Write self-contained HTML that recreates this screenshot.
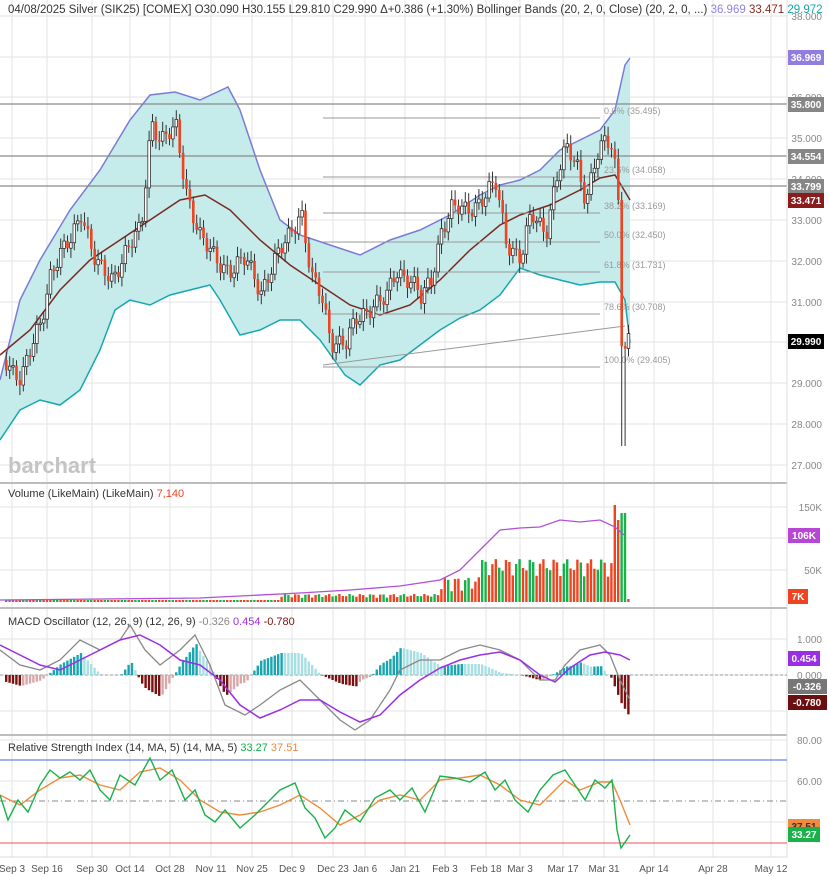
<!DOCTYPE html>
<html><head><meta charset="utf-8"><style>
html,body{margin:0;padding:0;background:#fff;}
svg{display:block;font-family:"Liberation Sans",sans-serif;}
</style></head><body>
<svg id="s" width="829" height="876" viewBox="0 0 829 876" xmlns="http://www.w3.org/2000/svg">
<rect width="829" height="876" fill="#fff"/>
<g id="grid" stroke="#e3e3e3" stroke-width="1"></g>
<polygon fill="#c6ebeb" points="0,380 20,300 40,260 70,210 100,170 130,120 150,95 175,92 200,100 228,87 240,110 260,170 280,220 300,235 330,245 360,255 390,240 420,230 450,215 480,195 500,185 520,180 540,170 560,150 580,140 600,130 615,110 625,65 630,58 630,343 625,300 615,282 600,282 580,285 560,280 540,275 520,268 500,295 480,310 460,318 440,330 420,345 400,360 380,365 360,385 345,375 320,340 300,320 280,320 260,330 240,335 220,300 210,285 190,290 170,295 150,305 130,300 115,310 100,350 80,390 60,405 40,400 20,410 0,440"/>
<polyline fill="none" stroke="#7b7bd6" stroke-width="1.5" points="0,380 20,300 40,260 70,210 100,170 130,120 150,95 175,92 200,100 228,87 240,110 260,170 280,220 300,235 330,245 360,255 390,240 420,230 450,215 480,195 500,185 520,180 540,170 560,150 580,140 600,130 615,110 625,65 630,58"/>
<polyline fill="none" stroke="#17a7b0" stroke-width="1.5" points="0,440 20,410 40,400 60,405 80,390 100,350 115,310 130,300 150,305 170,295 190,290 210,285 220,300 240,335 260,330 280,320 300,320 320,340 345,375 360,385 380,365 400,360 420,345 440,330 460,318 480,310 500,295 520,268 540,275 560,280 580,285 600,282 615,282 625,300 630,343"/>
<polyline fill="none" stroke="#7a2a22" stroke-width="1.5" points="0,355 30,330 60,290 90,260 120,240 150,220 180,200 205,195 230,210 260,240 290,265 320,285 350,305 380,315 410,305 440,280 470,250 500,225 520,215 550,205 580,190 600,178 615,175 630,200"/>
<g stroke="#8a8a8a" stroke-width="1.2">
<line x1="0" y1="104" x2="787" y2="104"/><line x1="0" y1="156" x2="787" y2="156"/><line x1="0" y1="186" x2="787" y2="186"/>
</g>
<g stroke="#999" stroke-width="1">
<line x1="323" y1="118" x2="600" y2="118"/><line x1="323" y1="177" x2="600" y2="177"/><line x1="323" y1="213" x2="600" y2="213"/><line x1="323" y1="242" x2="600" y2="242"/><line x1="323" y1="272" x2="600" y2="272"/><line x1="323" y1="314" x2="600" y2="314"/><line x1="323" y1="367" x2="600" y2="367"/>
<line x1="323" y1="365" x2="625" y2="326"/>
</g>
<g fill="#999" font-size="9">
<text x="604" y="114">0.0% (35.495)</text><text x="604" y="173">23.6% (34.058)</text><text x="604" y="209">38.2% (33.169)</text><text x="604" y="238">50.0% (32.450)</text><text x="604" y="268">61.8% (31.731)</text><text x="604" y="310">78.6% (30.708)</text><text x="604" y="363">100.0% (29.405)</text>
</g>
<g id="candles"></g>
<text x="8" y="473" font-size="22" font-weight="bold" fill="#c4c4c4">barchart</text>
<g stroke="#bdbdbd" stroke-width="2"><line x1="0" y1="483" x2="787" y2="483"/><line x1="0" y1="608" x2="787" y2="608"/><line x1="0" y1="735" x2="787" y2="735"/></g>
<line x1="787" y1="0" x2="787" y2="857" stroke="#ddd"/>
<line x1="0" y1="857" x2="787" y2="857" stroke="#ddd"/>
<g id="vol"></g>
<polyline fill="none" stroke="#b34fd8" stroke-width="1.3" points="0,600 200,598 300,593 350,590 400,586 440,580 460,570 480,550 500,530 520,528 540,527 560,520 580,522 600,520 615,527 624,535"/>
<line x1="0" y1="675" x2="787" y2="675" stroke="#999" stroke-dasharray="3,2"/>
<g id="hist"></g>
<polyline id="mg" fill="none" stroke="#888" stroke-width="1.3" points="0,650 20,665 40,670 60,660 80,640 100,650 120,640 130,625 145,650 160,665 180,650 195,635 210,665 225,705 245,715 260,705 280,690 300,680 320,700 340,720 355,730 370,720 390,690 400,670 420,660 440,660 460,650 480,645 500,650 520,660 540,680 555,680 565,665 580,650 600,645 610,655 620,680 630,700"/>
<polyline id="mp" fill="none" stroke="#9a2ee6" stroke-width="1.5" points="0,645 20,655 40,665 60,670 80,660 100,650 120,640 140,635 160,645 180,660 200,665 220,680 240,705 260,718 280,710 300,700 320,700 340,712 360,722 380,715 400,695 420,680 440,668 460,660 480,655 500,652 520,660 540,675 555,682 570,668 590,655 605,652 620,655 630,660"/>
<line x1="0" y1="760" x2="787" y2="760" stroke="#4466ee"/>
<line x1="0" y1="801" x2="787" y2="801" stroke="#888" stroke-dasharray="6,3,1,3"/>
<line x1="0" y1="843" x2="787" y2="843" stroke="#f05050"/>
<polyline fill="none" stroke="#f08a3c" stroke-width="1.4" points="0,795 20,805 40,790 60,778 80,775 100,785 120,790 140,772 160,768 180,780 200,800 220,812 240,815 260,812 280,805 300,795 320,808 340,825 360,815 380,800 400,795 420,800 440,780 460,778 480,775 500,785 520,800 540,805 555,790 565,780 580,790 600,782 612,782 620,800 630,825"/>
<polyline fill="none" stroke="#19b24a" stroke-width="1.4" points="0,795 8,820 18,800 28,812 40,785 50,770 60,778 70,772 80,780 90,770 100,790 110,800 120,775 135,785 150,758 160,780 172,770 185,800 195,790 205,815 215,822 225,810 240,828 255,815 270,800 280,790 295,783 305,808 315,818 325,838 335,828 345,810 360,822 375,798 390,790 400,800 412,788 425,812 440,776 455,778 470,782 485,772 495,790 505,780 515,800 528,812 540,790 553,775 565,770 575,785 585,800 595,780 605,788 612,780 617,830 621,848 630,835"/>
<text x="8" y="13" font-size="11.5" fill="#333">04/08/2025 Silver (SIK25) [COMEX] O30.090 H30.155 L29.810 C29.990 Δ+0.386 (+1.30%) Bollinger Bands (20, 2, 0, Close)  (20, 2, 0, ...) <tspan fill="#8f84e0">36.969</tspan> <tspan fill="#8b2a22">33.471</tspan> <tspan fill="#19a6a6">29.972</tspan></text>
<text x="8" y="497" font-size="11" fill="#333">Volume (LikeMain)  (LikeMain) <tspan fill="#ee4422">7,140</tspan></text>
<text x="8" y="625" font-size="11" fill="#333">MACD Oscillator (12, 26, 9)  (12, 26, 9) <tspan fill="#888">-0.326</tspan> <tspan fill="#9a2ee6">0.454</tspan> <tspan fill="#7a1010">-0.780</tspan></text>
<text x="8" y="751" font-size="11" fill="#333">Relative Strength Index (14, MA, 5)  (14, MA, 5) <tspan fill="#19b24a">33.27</tspan> <tspan fill="#f08a3c">37.51</tspan></text>
<g font-size="10" fill="#888" text-anchor="end">
<text x="822" y="20">38.000</text><text x="822" y="101">36.000</text><text x="822" y="142">35.000</text><text x="822" y="183">34.000</text><text x="822" y="224">33.000</text><text x="822" y="265">32.000</text><text x="822" y="306">31.000</text><text x="822" y="387">29.000</text><text x="822" y="428">28.000</text><text x="822" y="469">27.000</text>
<text x="822" y="511">150K</text><text x="822" y="574">50K</text>
<text x="822" y="643">1.000</text><text x="822" y="679">0.000</text>
<text x="822" y="744">80.00</text><text x="822" y="785">60.00</text>
</g>
<g font-size="10" font-weight="bold" fill="#fff" text-anchor="middle">
<rect x="788" y="50" width="36" height="15" fill="#8f7de0"/><text x="806" y="61">36.969</text>
<rect x="788" y="97" width="36" height="15" fill="#868686"/><text x="806" y="108">35.800</text>
<rect x="788" y="149" width="36" height="15" fill="#868686"/><text x="806" y="160">34.554</text>
<rect x="788" y="179" width="36" height="15" fill="#868686"/><text x="806" y="190">33.799</text>
<rect x="788" y="193" width="36" height="15" fill="#8b1c1c"/><text x="806" y="204">33.471</text>
<rect x="788" y="334" width="36" height="15" fill="#000"/><text x="806" y="345">29.990</text>
<rect x="788" y="528" width="32" height="15" fill="#b846d4"/><text x="804" y="539">106K</text>
<rect x="788" y="589" width="20" height="15" fill="#ee4422"/><text x="798" y="600">7K</text>
<rect x="788" y="651" width="32" height="15" fill="#9a2ee6"/><text x="804" y="662">0.454</text>
<rect x="788" y="679" width="39" height="15" fill="#777"/><text x="807" y="690">-0.326</text>
<rect x="788" y="695" width="39" height="15" fill="#6a1010"/><text x="807" y="706">-0.780</text>
<rect x="788" y="819" width="32" height="15" fill="#f08a3c"/><text x="804" y="830" fill="#333">37.51</text>
<rect x="788" y="827" width="32" height="15" fill="#19b24a"/><text x="804" y="838">33.27</text>
</g>
<g font-size="10" fill="#555" text-anchor="middle">
<text x="12" y="872">Sep 3</text><text x="47" y="872">Sep 16</text><text x="92" y="872">Sep 30</text><text x="130" y="872">Oct 14</text><text x="170" y="872">Oct 28</text><text x="211" y="872">Nov 11</text><text x="252" y="872">Nov 25</text><text x="292" y="872">Dec 9</text><text x="333" y="872">Dec 23</text><text x="365" y="872">Jan 6</text><text x="405" y="872">Jan 21</text><text x="445" y="872">Feb 3</text><text x="486" y="872">Feb 18</text><text x="520" y="872">Mar 3</text><text x="563" y="872">Mar 17</text><text x="604" y="872">Mar 31</text><text x="654" y="872">Apr 14</text><text x="713" y="872">Apr 28</text><text x="771" y="872">May 12</text>
</g>
</svg>
<script>
(function(){
var NS="http://www.w3.org/2000/svg";
function el(p,t,a){var e=document.createElementNS(NS,t);for(var k in a)e.setAttribute(k,a[k]);p.appendChild(e);return e;}
var g=document.getElementById("grid");
[12,47,92,130,170,211,252,292,333,365,405,445,486,520,563,604,654,713,771].forEach(function(x){el(g,"line",{x1:x,y1:0,x2:x,y2:857});});
[16,57,97,138,179,220,261,302,342,383,424,465,507,538,570,639,675,711,740,781,822].forEach(function(y){el(g,"line",{x1:0,y1:y,x2:787,y2:y});});
function interp(p,x){for(var i=0;i<p.length-1;i++){if(x<=p[i+1][0]){var t=(x-p[i][0])/(p[i+1][0]-p[i][0]);return p[i][1]+t*(p[i+1][1]-p[i][1]);}}return p[p.length-1][1];}
var P=[[5,360],[20,380],[40,320],[50,270],[70,240],[80,210],[95,265],[110,280],[125,250],[140,230],[150,120],[160,140],[175,130],[185,190],[200,240],[215,260],[230,270],[245,260],[260,290],[275,260],[290,230],[300,210],[310,280],[320,295],[330,340],[345,345],[355,320],[370,305],[385,300],[395,270],[410,280],[420,300],[430,280],[440,230],[450,210],[465,210],[480,200],[495,185],[505,240],[520,260],[530,215],[545,230],[555,180],[565,150],[575,160],[585,200],[595,160],[605,140],[612,145],[617,200],[621,372],[626,330],[630,342]];
var c=document.getElementById("candles"),prev=360,i=0;
for(var x=5;x<=630;x+=3.4){i++;var cl=interp(P,x)+Math.sin(i*1.7)*8+Math.sin(i*0.6)*4;if(x>615)cl=interp(P,x);
var op=prev,top=Math.min(op,cl),bot=Math.max(op,cl),h=Math.max(bot-top,1.5);
var hi=top-4-Math.abs(Math.sin(i*2.3))*6,lo=bot+4+Math.abs(Math.cos(i*1.9))*6;
if(x>620&&x<624)lo=446;
el(c,"line",{x1:x+1.3,y1:hi,x2:x+1.3,y2:lo,stroke:"#333","stroke-width":1});
if(cl>op)el(c,"rect",{x:x,y:top,width:2.6,height:h,fill:"#ee4422"});
else el(c,"rect",{x:x,y:top,width:2.6,height:h,fill:"#fff",stroke:"#333","stroke-width":0.8});
prev=cl;}
var v=document.getElementById("vol");i=0;
for(var x=5;x<=628;x+=3.4){i++;var base=x<280?2:x<440?4+Math.abs(Math.sin(i))*4:x<480?10+Math.abs(Math.sin(i))*15:25+Math.abs(Math.sin(i*0.9))*18;
var col=(Math.sin(i*1.3)>0.3?"#19b24a":"#ee4422");
if(x>612&&x<616){base=97;col="#ee4422";}else if(x>616&&x<620){base=82;col="#ee4422";}else if(x>620&&x<625){base=89;col="#19b24a";}else if(x>=625){base=3;col="#ee4422";}
el(v,"rect",{x:x,y:602-base,width:2.4,height:base,fill:col});}
var mg=document.getElementById("mg").getAttribute("points").trim().split(/\s+/).map(function(s){return s.split(",").map(Number);});
var mp=document.getElementById("mp").getAttribute("points").trim().split(/\s+/).map(function(s){return s.split(",").map(Number);});
var hg=document.getElementById("hist"),pd=0;
for(var x=5;x<=630;x+=3.4){var d=(interp(mg,x)-interp(mp,x))*1.1;var up=d<0;var col=up?(d<pd?"#1aa6b0":"#a8dfe2"):(d>pd?"#7a1010":"#d8a8a8");
el(hg,"rect",{x:x,y:Math.min(675,675+d),width:2.4,height:Math.abs(d),fill:col});pd=d;}
})();
</script>
</body></html>
